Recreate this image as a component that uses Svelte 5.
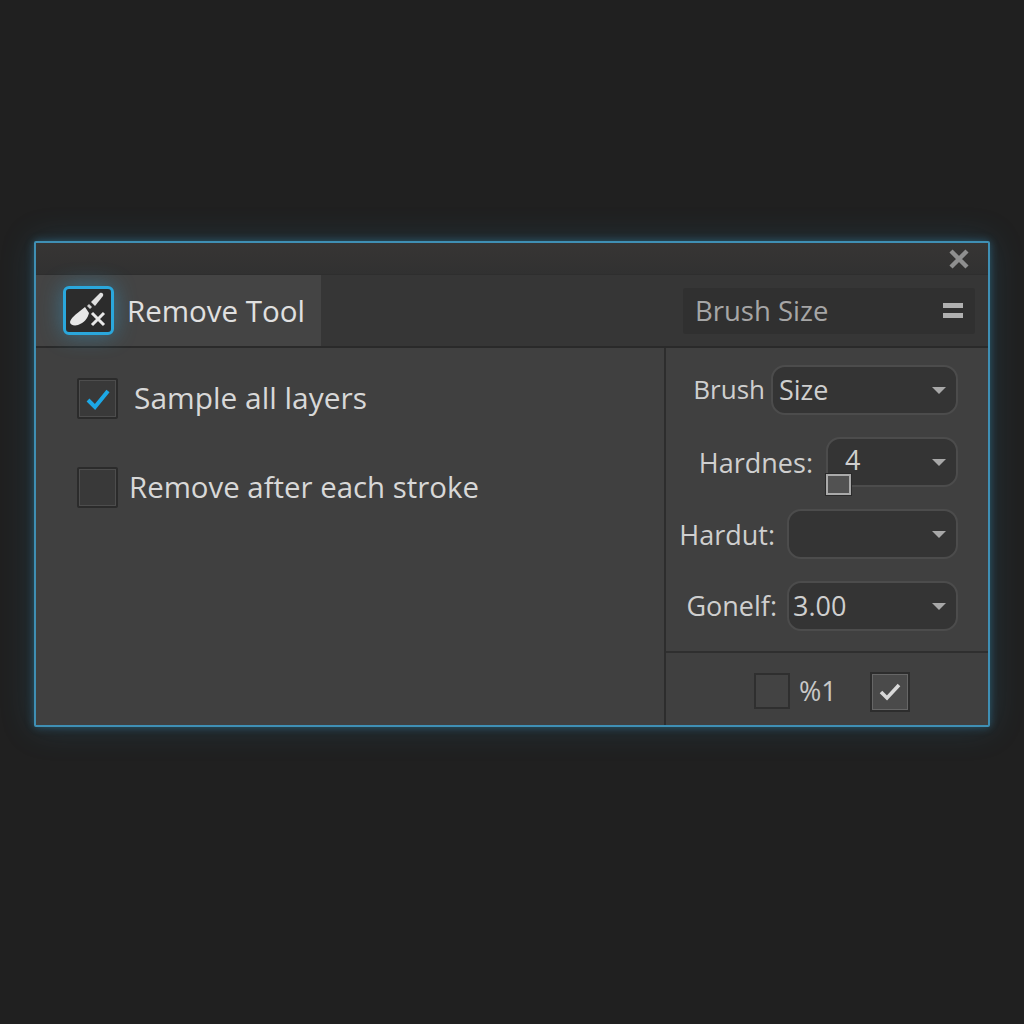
<script>
    const fields = [
        { label: "Brush", value: "Size", cls: "f-brush" },
        { label: "Hardnes:", value: "4", cls: "f-hard" },
        { label: "Hardut:", value: "", cls: "f-hardut" },
        { label: "Gonelf:", value: "3.00", cls: "f-gonelf" },
    ];
</script>

<div class="page">
    <div class="panel">
        <div class="titlebar">
            <svg class="close" width="22" height="22" viewBox="0 0 22 22">
                <path d="M3 3 L19 19 M19 3 L3 19" stroke="#8f8f8f" stroke-width="4.4" fill="none" />
            </svg>
        </div>

        <div class="toolbar">
            <div class="tool-tab">
                <div class="tool-icon">
                    <svg width="44" height="44" viewBox="0 0 44 44">
                        <path d="M3 33 C4 29 9 25 13 22 L18 18 L22 24 C21 29 17 34 11 36 C7 37 3 36 3 33 Z" fill="#e8e8e8" />
                        <path d="M20 17 L22 15 L25 18 L23 20 Z" fill="#cfcfcf" />
                        <path d="M24 13 L33 4 C35 3 37 5 36 7 L28 17 Z" fill="#e0e0e0" />
                        <path d="M25 24 L37 36 M37 24 L25 36" stroke="#e8e8e8" stroke-width="3" fill="none" />
                    </svg>
                </div>
                <span class="tool-name">Remove Tool</span>
            </div>
            <div class="brush-select">
                <span>Brush Size</span>
                <div class="menu"><i></i><i></i></div>
            </div>
        </div>

        <div class="body">
            <div class="options">
                <label class="opt opt-sample">
                    <span class="check">
                        <svg width="26" height="22" viewBox="0 0 26 22">
                            <path d="M3 12 L10 19 L23 3" stroke="#1ca8e6" stroke-width="4" fill="none" />
                        </svg>
                    </span>
                    <span class="opt-text">Sample all layers</span>
                </label>
                <label class="opt opt-remove">
                    <span class="check"></span>
                    Remove after each stroke
                </label>
            </div>

            <div class="side">
                <div class="fields">
                    {#each fields as f}
                        <div class="field {f.cls}">
                            <span class="lbl">{f.label}</span>
                            <div class="select">
                                <span class="val">{f.value}</span>
                                <span class="caret"></span>
                                {#if f.cls === "f-hard"}
                                    <span class="thumb"></span>
                                {/if}
                            </div>
                        </div>
                    {/each}
                </div>
                <div class="footer">
                    <span class="small-box"></span>
                    <span class="pct">%1</span>
                    <span class="ok-box">
                        <svg width="22" height="18" viewBox="0 0 22 18">
                            <path d="M2 9 L8 15 L20 2" stroke="#d8d8d8" stroke-width="3.6" fill="none" />
                        </svg>
                    </span>
                </div>
            </div>
        </div>
    </div>
</div>

<style>
    :global(body) {
        margin: 0;
        background: #202020;
    }

    .page {
        width: 1024px;
        height: 1024px;
        box-sizing: border-box;
        padding: 241px 34px 0;
        font-family: "Open Sans", "Noto Sans", sans-serif;
        color: #d6d6d6;
    }

    .panel {
        width: 956px;
        height: 486px;
        box-sizing: border-box;
        border: 2px solid #3f8fb4;
        border-radius: 2px;
        background: #404040;
        box-shadow: 0 0 8px rgba(60, 165, 215, 0.4), 0 0 34px rgba(45, 130, 175, 0.22);
        display: flex;
        flex-direction: column;
    }

    .titlebar {
        height: 31px;
        background: linear-gradient(#373534, #313131);
        display: flex;
        justify-content: flex-end;
        align-items: center;
        padding-right: 18px;
        box-sizing: border-box;
    }

    .toolbar {
        height: 74px;
        box-sizing: border-box;
        background: #363636;
        border-top: 1px solid #2e2e2e;
        border-bottom: 2px solid #2a2a2a;
        display: flex;
        justify-content: space-between;
        align-items: stretch;
    }

    .tool-tab {
        width: 285px;
        background: #444444;
        display: flex;
        align-items: center;
        padding-left: 27px;
        box-sizing: border-box;
        gap: 13px;
    }

    .tool-icon {
        width: 51px;
        height: 49px;
        box-sizing: border-box;
        border: 3px solid #2aa7dc;
        border-radius: 6px;
        background: #2c2c2c;
        box-shadow: 0 0 22px rgba(50, 170, 225, 0.45);
        display: flex;
        align-items: center;
        justify-content: center;
    }

    .tool-name {
        font-size: 29.5px;
        color: #e0e0e0;
        margin-top: -1px;
    }

    .brush-select {
        width: 292px;
        height: 46px;
        align-self: center;
        margin-right: 13px;
        background: #303030;
        border-radius: 3px;
        box-sizing: border-box;
        padding: 0 12px 0 12px;
        display: flex;
        justify-content: space-between;
        align-items: center;
        font-size: 27.5px;
        color: #a6a6a6;
    }

    .menu {
        display: flex;
        flex-direction: column;
        gap: 5px;
    }

    .menu i {
        display: block;
        width: 20px;
        height: 5px;
        background: #b0b0b0;
    }

    .body {
        flex: 1;
        display: flex;
        min-height: 0;
    }

    .options {
        flex: 1;
        border-right: 2px solid #2d2d2d;
        box-sizing: border-box;
        padding: 30px 0 0 41px;
    }

    .opt {
        display: flex;
        align-items: center;
        color: #d8d8d8;
        line-height: 41px;
    }

    .opt-sample {
        gap: 16px;
        font-size: 29.9px;
    }

    .opt-text {
        margin-top: -2px;
    }

    .opt-remove {
        gap: 11px;
        margin-top: 48px;
        font-size: 29.4px;
    }

    .check {
        width: 41px;
        height: 41px;
        box-sizing: border-box;
        border: 2px solid #2b2b2b;
        outline: 1px solid #4d4d4d;
        outline-offset: -3px;
        border-radius: 2px;
        background: #393939;
        display: flex;
        align-items: center;
        justify-content: center;
    }

    .side {
        width: 322px;
        display: flex;
        flex-direction: column;
    }

    .fields {
        flex: 1;
        padding: 17px 30px 0 0;
        display: flex;
        flex-direction: column;
        gap: 22px;
        box-sizing: border-box;
    }

    .field {
        display: flex;
        justify-content: flex-end;
        align-items: center;
        height: 50px;
        font-size: 27px;
    }

    .lbl {
        color: #cfcfcf;
    }

    .select {
        position: relative;
        height: 50px;
        box-sizing: border-box;
        border: 2px solid #4c4c4c;
        border-radius: 14px;
        background: #343434;
        display: flex;
        align-items: center;
        justify-content: space-between;
        padding: 0 10px 0 6px;
        margin-left: 6px;
        color: #cfcfcf;
    }

    .f-brush .select { width: 187px; }
    .f-hard .select { width: 132px; margin-left: 13px; }
    .f-hardut .select { width: 171px; margin-left: 12px; }
    .f-gonelf .select { width: 171px; margin-left: 10px; }

    .f-brush .lbl { font-size: 26px; margin-top: -2px; }
    .f-brush .val { margin-top: -1px; }
    .f-hard .val { padding-left: 11px; margin-top: -5px; }
    .f-gonelf .lbl { margin-top: -2px; margin-left: -1px; }
    .f-gonelf .val { margin-top: -2px; margin-left: -2px; }

    .caret {
        width: 0;
        height: 0;
        border-left: 7px solid transparent;
        border-right: 7px solid transparent;
        border-top: 7px solid #a8a8a8;
    }

    .thumb {
        position: absolute;
        left: -2px;
        top: 35px;
        width: 25px;
        height: 21px;
        box-sizing: border-box;
        border: 2px solid #aaaaaa;
        outline: 1px solid #2a2a2a;
        background: #525252;
    }

    .footer {
        height: 74px;
        box-sizing: border-box;
        border-top: 2px solid #2f2f2f;
        display: flex;
        align-items: center;
        padding: 3px 0 0 88px;
    }

    .small-box {
        width: 36px;
        height: 36px;
        box-sizing: border-box;
        border: 2px solid #2f2f2f;
        background: #434343;
    }

    .pct {
        font-size: 27px;
        color: #c8c8c8;
        margin-left: 9px;
    }

    .ok-box {
        width: 40px;
        height: 40px;
        box-sizing: border-box;
        margin: 3px 0 0 33px;
        border: 2px solid #2d2d2d;
        outline: 1px solid #666;
        outline-offset: -3px;
        background: #4a4a4a;
        display: flex;
        align-items: center;
        justify-content: center;
    }
</style>
